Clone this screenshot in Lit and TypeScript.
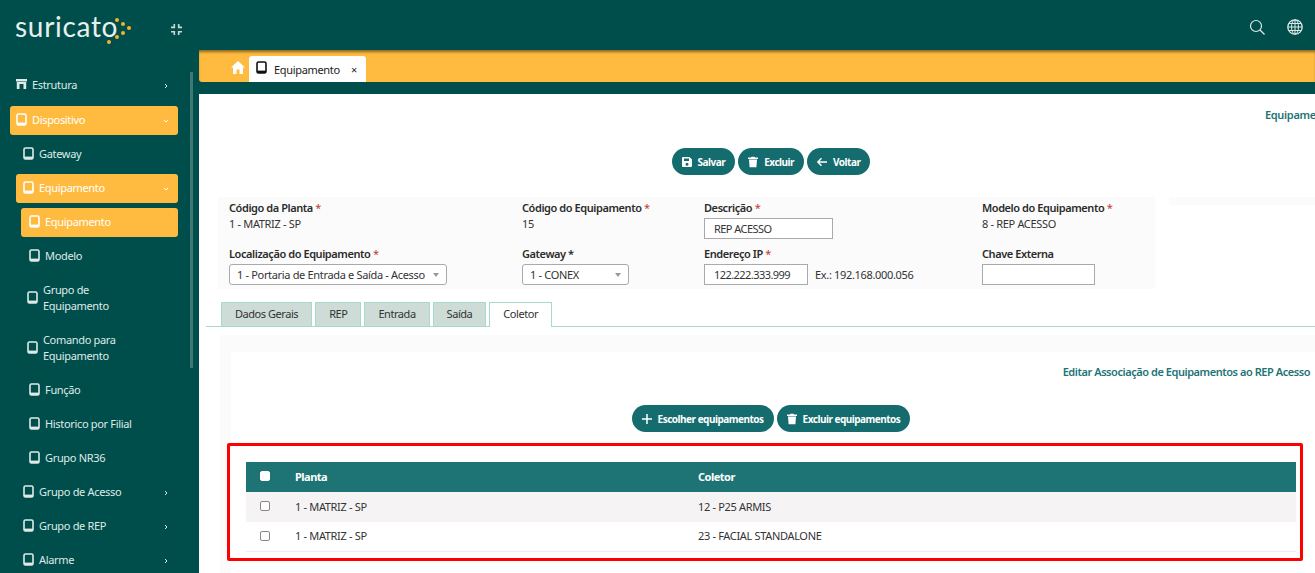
import { LitElement, html, css, svg } from 'lit';
import { customElement } from 'lit/decorators.js';

const deviceIcon = html`<svg class="dev" viewBox="0 0 11 13" fill="none">
  <rect x="1" y="1" width="9" height="11" rx="1.500" stroke="currentColor" stroke-width="1.600"/>
  <rect x="1" y="9.600" width="9" height="2.400" fill="currentColor"/>
</svg>`;

const chevronRight = html`<svg class="chev" viewBox="0 0 6 6" fill="none"><path d="M2 1l2 2-2 2" stroke="currentColor" stroke-width="1"/></svg>`;
const chevronDown = html`<svg class="chev" viewBox="0 0 6 6" fill="none"><path d="M1 2l2 2 2-2" stroke="currentColor" stroke-width="1"/></svg>`;

const saveIcon = svg`<path d="M1 2a1 1 0 0 1 1-1h6.500L11 3.500V10a1 1 0 0 1-1 1H2a1 1 0 0 1-1-1zM3 2.500V5h5V2.500zM6 6.800a1.500 1.500 0 1 0 0 3 1.500 1.500 0 0 0 0-3z" fill="currentColor" fill-rule="evenodd"/>`;
const trashIcon = svg`<path d="M4.500.8h3l.5.8H11v1.300H1V1.600h3zM2 3.600h8l-.6 7.600H2.600z" fill="currentColor"/>`;
const backIcon = svg`<path d="M11 6H2M5.500 2.300 1.800 6l3.700 3.700" stroke="currentColor" stroke-width="1.400" fill="none"/>`;
const plusIcon = svg`<path d="M6 1v10M1 6h10" stroke="currentColor" stroke-width="1.500" fill="none"/>`;

interface MenuItem {
  label: string[];
  level: number;
  active?: boolean;
  arrow?: 'right' | 'down';
}

const menu: MenuItem[] = [
  { label: ['Dispositivo'], level: 0, active: true, arrow: 'down' },
  { label: ['Gateway'], level: 1 },
  { label: ['Equipamento'], level: 1, active: true, arrow: 'down' },
  { label: ['Equipamento'], level: 2, active: true },
  { label: ['Modelo'], level: 2 },
  { label: ['Grupo de', 'Equipamento'], level: 2 },
  { label: ['Comando para', 'Equipamento'], level: 2 },
  { label: ['Função'], level: 2 },
  { label: ['Historico por Filial'], level: 2 },
  { label: ['Grupo NR36'], level: 2 },
  { label: ['Grupo de Acesso'], level: 1, arrow: 'right' },
  { label: ['Grupo de REP'], level: 1, arrow: 'right' },
  { label: ['Alarme'], level: 1, arrow: 'right' },
];

@customElement('app-root')
export class AppRoot extends LitElement {
  static styles = css`
    :host {
      display: flex;
      width: 1315px;
      height: 573px;
      overflow: hidden;
      background: #004e4b;
      font-family: "Noto Sans", "Open Sans", sans-serif;
      font-size: 11px;
      letter-spacing: -0.33px;
      color: #333;
    }

    /* sidebar */
    .sidebar {
      position: relative;
      flex: none;
      width: 193px;
      height: 573px;
      overflow: hidden;
      background: #004e4b;
      color: #dfeae8;
    }
    .thumb {
      position: absolute;
      left: 190px;
      top: 72px;
      width: 3px;
      height: 296px;
      background: #3f7875;
    }
    .brand {
      display: flex;
      justify-content: space-between;
      height: 58px;
      padding: 0 11px 0 15px;
    }
    .logo {
      position: relative;
      font-family: "Lato", sans-serif;
      font-weight: 400;
      font-size: 28px;
      letter-spacing: 0.7px;
      line-height: 53px;
      color: #e8f0ee;
    }
    .dots {
      position: absolute;
      left: 85px;
      top: 14px;
      width: 32px;
      height: 32px;
    }
    .collapse { width: 11px; height: 11px; color: #c9d6d4; align-self: center; }
    .nav { display: flex; flex-direction: column; gap: 5px; padding-top: 13px; }
    .item {
      display: flex;
      align-items: center;
      min-height: 29px;
      box-sizing: border-box;
      margin-right: 15px;
      border-radius: 3px;
      line-height: 15.500px;
    }
    .item.level0 { margin-left: 10px; padding-left: 6px; }
    .item.level1 { margin-left: 16px; padding-left: 7px; }
    .item.level2 { margin-left: 21px; padding-left: 8px; }
    .item.active { background: #ffbb3f; color: #fff; }
    .item.tall { min-height: 45px; padding-left: 6px; }
    .item .text { flex: 1; margin: 0 0 2px 5px; }
    .dev { width: 11px; height: 13px; flex: none; margin-bottom: 3px; }
    .chev { width: 6px; height: 6px; margin-right: 9px; flex: none; }
    .store { width: 11px; height: 10px; flex: none; margin-bottom: 3px; }
    .estr { margin-bottom: 1px; }

    /* main column */
    .main {
      flex: none;
      width: 1116px;
      margin-left: 6px;
      display: flex;
      flex-direction: column;
      height: 573px;
      overflow: hidden;
    }
    .topbar {
      flex: none;
      height: 50px;
      display: flex;
      align-items: center;
      justify-content: flex-end;
      gap: 22px;
      padding: 3px 12px 0 0;
      box-sizing: border-box;
      color: #dce8e6;
    }
    .topbar svg { width: 16px; height: 16px; }
    .tabbar {
      flex: none;
      height: 32px;
      background: #ffbb3f;
      display: flex;
      align-items: flex-end;
      padding-left: 32px;
      border-radius: 0 0 0 3px;
      box-shadow: inset 0 3px 3px -1px rgba(60, 50, 10, 0.6);
    }
    .home { width: 14px; height: 13px; color: #fff; margin: 0 4px 8px 0; }
    .open-tab {
      height: 26px;
      width: 117px;
      box-sizing: border-box;
      background: #fff;
      border-radius: 3px 3px 0 0;
      display: flex;
      align-items: center;
      padding: 0 9px 0 7px;
      color: #222;
    }
    .open-tab .dev { color: #111; }
    .open-tab span { flex: 1; margin-left: 7px; }
    .open-tab b { font-size: 11px; font-weight: 400; }
    .strip { flex: none; height: 12px; }

    .page {
      flex: 1;
      background: #fff;
      min-width: 0;
      position: relative;
    }
    .crumb {
      height: 54px;
      padding: 13px 0 0 1066px;
      box-sizing: border-box;
      font-weight: 600;
      color: #1e7475;
      white-space: nowrap;
    }
    .actions { display: flex; gap: 3px; justify-content: center; }
    .actions.top { padding-left: 28px; }
    .btn {
      display: flex;
      align-items: center;
      gap: 5px;
      height: 27px;
      padding: 0 10px 0 9px;
      box-sizing: border-box;
      border-radius: 14px;
      background: #156c6e;
      color: #fff;
      font-size: 10px;
      font-weight: 700;
      letter-spacing: -0.5px;
      white-space: nowrap;
    }
    .btn svg { width: 12px; height: 12px; flex: none; }

    .form {
      margin: 22px 0 0 19px;
      width: 937px;
      height: 92px;
      box-sizing: border-box;
      background: #fbfbfb;
      padding: 3px 0 0 11px;
      display: grid;
      grid-template-columns: 293px 182px 278px 1fr;
      grid-template-rows: 46px 43px;
    }
    .side-strip {
      position: absolute;
      left: 970px;
      top: 103px;
      width: 146px;
      height: 8px;
      background: #fbfbfb;
    }
    .field { display: flex; flex-direction: column; line-height: 15px; }
    .field label { font-weight: 600; color: #2b2b2b; line-height: 16px; letter-spacing: -0.43px; }
    .field label i { font-style: normal; color: #c0392b; font-weight: 400; }
    .input {
      margin-top: 2px;
      height: 21px;
      box-sizing: border-box;
      border: 1px solid #aaa;
      padding: 0 9px;
      display: flex;
      align-items: center;
      background: #fff;
      letter-spacing: -0.55px;
    }
    .input.title { width: 129px; }
    .input.ip { width: 104px; }
    .input.key { width: 113px; }
    .select {
      margin-top: 2px;
      height: 21px;
      box-sizing: border-box;
      border: 1px solid #aaa;
      border-radius: 3px;
      padding: 0 7px;
      display: flex;
      align-items: center;
      justify-content: space-between;
      background: #fff;
      white-space: nowrap;
    }
    .select.place { width: 218px; }
    .select.gate { width: 107px; }
    .select::after {
      content: "";
      border: 3px solid transparent;
      border-top: 4px solid #999;
      border-bottom: 0;
    }
    .inline { display: flex; align-items: center; gap: 7px; margin-top: 2px; }
    .inline .input { margin-top: 0; }

    .tabs {
      display: flex;
      gap: 3px;
      margin-top: 13px;
      padding-left: 15px;
      margin-left: 7px;
      border-bottom: 1px solid #a9d8cc;
      height: 24px;
      position: relative;
    }
    .tab {
      height: 24px;
      box-sizing: border-box;
      border: 1px solid #a9d8cc;
      border-bottom: 0;
      background: #cddcd6;
      padding: 0 13px 2px;
      display: flex;
      align-items: center;
      letter-spacing: -0.45px;
    }
    .tab.on { background: #fff; height: 25px; padding-bottom: 3px; }

    .tabpanel {
      margin: 8px 0 0 21px;
      height: 240px;
      background: #fbfbfb;
      padding: 17px 0 0 11px;
    }
    .tabpanel-inner { background: #fff; height: 223px; }
    .panel-title {
      height: 37px;
      padding-top: 12px;
      box-sizing: border-box;
      padding-right: 5px;
      text-align: right;
      font-weight: 600;
      letter-spacing: -0.45px;
      color: #1e7475;
    }
    .actions.sub { margin-left: -4px; margin-top: 16px; }

    .hl {
      margin: 11px 12px 0 -4px;
      height: 118px;
      box-sizing: border-box;
      border: 3px solid #f00;
      border-radius: 2px;
      padding: 16px 4px 0 16px;
    }
    .row {
      display: grid;
      grid-template-columns: 49px 403px 1fr;
      height: 30px;
      align-items: center;
      padding-bottom: 2px;
      box-sizing: border-box;
    }
    .row.head { background: #1e7475; color: #fff; font-weight: 700; letter-spacing: -0.5px; }
    .row.odd { background: #f5f3f4; }
    .row.even { border-bottom: 1px solid #eee; }
    .box {
      width: 8px;
      height: 8px;
      margin-left: 14px;
      border: 1px solid #888;
      border-radius: 2px;
      background: #fff;
    }
    .head .box { border-color: #fff; }
  `;

  private field(label: string, req: boolean, body: unknown, star = false) {
    return html`<div class="field">
      <label>${label}${req ? html` <i>*</i>` : ''}${star ? ' *' : ''}</label>
      ${body}
    </div>`;
  }

  private renderItem(m: MenuItem) {
    const tall = m.label.length > 1;
    return html`<div class="item level${m.level} ${m.active ? 'active' : ''} ${tall ? 'tall' : ''}">
      ${deviceIcon}
      <span class="text">${m.label.map((l, i) => html`${i ? html`<br />` : ''}${l}`)}</span>
      ${m.arrow === 'right' ? chevronRight : m.arrow === 'down' ? chevronDown : ''}
    </div>`;
  }

  render() {
    return html`
      <aside class="sidebar">
        <div class="brand">
          <div class="logo">suricato
            <svg class="dots" viewBox="0 0 32 32" fill="#f4b32e">
              <circle cx="17" cy="6" r="2"/><circle cx="23" cy="10" r="2"/>
              <circle cx="29" cy="14" r="2"/><circle cx="23" cy="19" r="2"/>
              <circle cx="17" cy="23" r="2"/><circle cx="9" cy="28" r="2"/>
            </svg>
          </div>
          <svg class="collapse" viewBox="0 0 10 10" fill="none" stroke="currentColor" stroke-width="1.500">
            <path d="M3 0v3H0M7 0v3h3M3 10V7H0M7 10V7h3"/>
          </svg>
        </div>
        <nav class="nav">
          <div class="item level0 estr">
            <svg class="store" viewBox="0 0 11 10" fill="currentColor"><path d="M0 0h11v2.500H0zM.8 3h9.400v7H7.500V5h-4v5H.8z"/></svg>
            <span class="text">Estrutura</span>
            ${chevronRight}
          </div>
          ${menu.map((m) => this.renderItem(m))}
        </nav>
        <div class="thumb"></div>
      </aside>
      <div class="main">
        <div class="topbar">
          <svg viewBox="0 0 16 16" fill="none" stroke="currentColor" stroke-width="1.200"><circle cx="7" cy="7" r="5.500"/><path d="M11 11l4.500 4.500"/></svg>
          <svg viewBox="0 0 16 16" fill="none" stroke="currentColor" stroke-width="1"><circle cx="8" cy="8" r="7.200" stroke-width="1.300"/><ellipse cx="8" cy="8" rx="3.500" ry="7.200"/><path d="M8 .8v14.400M1 8h14M2 4.500h12M2 11.500h12"/></svg>
        </div>
        <div class="tabbar">
          <svg class="home" viewBox="0 0 14 13" fill="currentColor"><path d="M7 0l7 6.500h-2V13H8.500V8.500h-3V13H2V6.500H0z"/></svg>
          <div class="open-tab">${deviceIcon}<span>Equipamento</span><b>×</b></div>
        </div>
        <div class="strip"></div>
        <section class="page">
          <div class="crumb">Equipamento</div>
          <div class="actions top">
            <div class="btn"><svg viewBox="0 0 12 12">${saveIcon}</svg>Salvar</div>
            <div class="btn"><svg viewBox="0 0 12 12">${trashIcon}</svg>Excluir</div>
            <div class="btn"><svg viewBox="0 0 12 12">${backIcon}</svg>Voltar</div>
          </div>
          <div class="side-strip"></div>
          <div class="form">
            ${this.field('Código da Planta', true, html`<div>1 - MATRIZ - SP</div>`)}
            ${this.field('Código do Equipamento', true, html`<div>15</div>`)}
            ${this.field('Descrição', true, html`<div class="input title">REP ACESSO</div>`)}
            ${this.field('Modelo do Equipamento', true, html`<div>8 - REP ACESSO</div>`)}
            ${this.field('Localização do Equipamento', true, html`<div class="select place">1 - Portaria de Entrada e Saída - Acesso</div>`)}
            ${this.field('Gateway', false, html`<div class="select gate">1 - CONEX</div>`, true)}
            ${this.field('Endereço IP', true, html`<div class="inline"><div class="input ip">122.222.333.999</div><span>Ex.: 192.168.000.056</span></div>`)}
            ${this.field('Chave Externa', false, html`<div class="input key"></div>`)}
          </div>
          <div class="tabs">
            <div class="tab">Dados Gerais</div>
            <div class="tab">REP</div>
            <div class="tab">Entrada</div>
            <div class="tab">Saída</div>
            <div class="tab on">Coletor</div>
          </div>
          <div class="tabpanel">
            <div class="tabpanel-inner">
              <div class="panel-title">Editar Associação de Equipamentos ao REP Acesso</div>
              <div class="actions sub">
                <div class="btn"><svg viewBox="0 0 12 12">${plusIcon}</svg>Escolher equipamentos</div>
                <div class="btn"><svg viewBox="0 0 12 12">${trashIcon}</svg>Excluir equipamentos</div>
              </div>
              <div class="hl">
                <div class="row head"><div class="box"></div><div>Planta</div><div>Coletor</div></div>
                <div class="row odd"><div class="box"></div><div>1 - MATRIZ - SP</div><div>12 - P25 ARMIS</div></div>
                <div class="row even"><div class="box"></div><div>1 - MATRIZ - SP</div><div>23 - FACIAL STANDALONE</div></div>
              </div>
            </div>
          </div>
        </section>
      </div>
    `;
  }
}
